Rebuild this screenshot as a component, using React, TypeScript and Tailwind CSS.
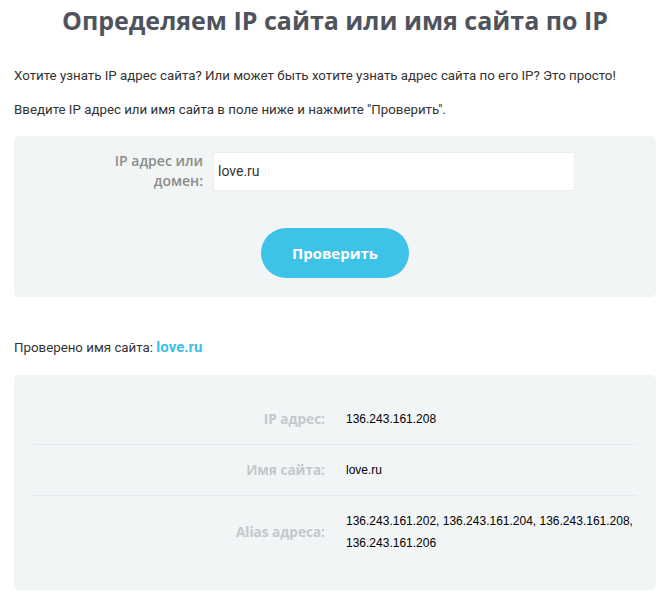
import React from "react";

const mont = { fontFamily: '"Open Sans", sans-serif' };

export default function App() {
  return (
    <div className="w-[670px] h-[594px] bg-white overflow-hidden px-[14px]" style={{ fontFamily: 'Roboto, sans-serif' }}>
      <h1 className="text-center text-[25px] leading-[40px] font-bold text-[#4f545c] pt-0" style={mont}>
        Определяем IP сайта или имя сайта по IP
      </h1>
      <p className="mt-[26px] text-[13.3px] leading-[20px] text-[#333]">
        Хотите узнать IP адрес сайта? Или может быть хотите узнать адрес сайта по его IP? Это просто!
      </p>
      <p className="mt-[14px] text-[13.3px] leading-[20px] text-[#333]">
        Введите IP адрес или имя сайта в поле ниже и нажмите "Проверить".
      </p>
      <div className="mt-[16px] h-[161px] rounded-[5px] bg-[#f2f5f6] flex flex-col items-center pt-[15px]">
        <div className="flex w-full items-center">
          <div className="w-[189px] text-right text-[14px] leading-[20px] font-semibold text-[#8c8c8c]" style={mont}>
            IP адрес или<br />домен:
          </div>
          <div className="ml-[10px] w-[362px] h-[39px] bg-white border border-[#ececec] flex items-center pl-[4px] text-[14px] text-[#333]">
            love.ru
          </div>
        </div>
        <button className="mt-[37px] w-[148px] h-[50px] rounded-full bg-[#3ec3e8] text-white text-[15px] font-bold" style={mont}>
          Проверить
        </button>
      </div>
      <p className="mt-[40px] text-[13.3px] leading-[20px] text-[#333]">
        Проверено имя сайта: <span className="font-bold text-[#3bbfe4] text-[15px]">love.ru</span>
      </p>
      <div className="mt-[17px] rounded-[5px] bg-[#f2f5f6] px-[19px] pt-[19px] pb-[22px]">
        {[
          ["IP адрес:", ["136.243.161.208"]],
          ["Имя сайта:", ["love.ru"]],
          ["Alias адреса:", ["136.243.161.202, 136.243.161.204, 136.243.161.208,", "136.243.161.206"]],
        ].map(([label, vals], i) => (
          <div key={i} className={`flex items-center py-[14px] ${i < 2 ? "border-b border-[#e6eaec]" : ""}`}>
            <div className="w-[292px] text-right text-[13.6px] font-bold text-[#c4c8cc]" style={mont}>
              {label as string}
            </div>
            <div className="ml-[21px] text-[12px] leading-[22px] text-black" style={{ fontFamily: '"Liberation Sans", Arial, sans-serif' }}>
              {(vals as string[]).map((v, j) => (
                <div key={j}>{v}</div>
              ))}
            </div>
          </div>
        ))}
      </div>
    </div>
  );
}
